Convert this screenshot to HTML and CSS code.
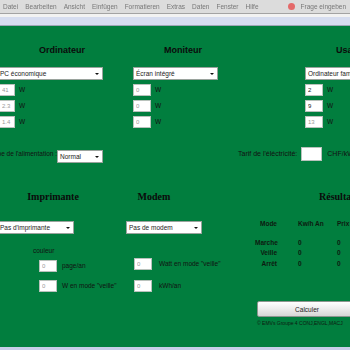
FILE: index.html
```html
<!DOCTYPE html>
<html lang="fr">

<head>
	<meta charset="UTF-8">
	<title>Consommation électrique</title>
	<link rel="stylesheet" href="styles.css">
</head>

<body>
	<div class="menubar">
		<span>Datei</span>
		<span>Bearbeiten</span>
		<span>Ansicht</span>
		<span>Einfügen</span>
		<span>Formatieren</span>
		<span>Extras</span>
		<span>Daten</span>
		<span>Fenster</span>
		<span>Hilfe</span>
		<span class="help"><i class="dot"></i>Frage eingeben</span>
	</div>
	<div class="menu-rule"></div>
	<div class="toolbar"></div>

	<div class="sheet">
		<!-- appareils -->
		<div class="devices">
			<div class="dev dev-pc">
				<h2>Ordinateur</h2>
				<div class="combo">PC économique</div>
				<div class="watt"><input value="41"> W</div>
				<div class="watt"><input value="2.3"> W</div>
				<div class="watt"><input value="1.4"> W</div>
			</div>
			<div class="dev dev-screen">
				<h2>Moniteur</h2>
				<div class="combo">Écran intégré</div>
				<div class="watt"><input value="0"> W</div>
				<div class="watt"><input value="0"> W</div>
				<div class="watt"><input value="0"> W</div>
			</div>
			<div class="dev dev-use">
				<h2>Usage</h2>
				<div class="combo">Ordinateur familial</div>
				<div class="watt"><input class="dark" value="2"> W</div>
				<div class="watt"><input class="dark" value="9"> W</div>
				<div class="watt"><input value="13"> W</div>
			</div>
		</div>

		<!-- réglages -->
		<div class="settings">
			<div class="supply">
				<div class="cut"><span>Type de l'alimentation :</span></div>
				<div class="combo">Normal</div>
			</div>
			<div class="tariff">
				<span>Tarif de l'éléctricité:</span>
				<input class="price" value="">
				<span>CHF/kWh</span>
			</div>
		</div>

		<div class="lower">
			<div class="printer">
				<h3>Imprimante</h3>
				<div class="combo">Pas d'imprimante</div>
				<div class="note">couleur</div>
				<div class="watt"><input value="0"> page/an</div>
				<div class="watt"><input value="0"> W en mode "veille"</div>
			</div>
			<div class="modem">
				<h3>Modem</h3>
				<div class="combo">Pas de modem</div>
				<div class="watt"><input value="0"> Watt en mode "veille"</div>
				<div class="watt"><input value="0"> kWh/an</div>
			</div>
			<div class="results">
				<h3>Résultats</h3>
				<div class="table">
					<b>Mode</b><b>Kw/h An</b><b>Prix</b>
					<b class="gap">Marche</b><b class="gap">0</b><b class="gap">0</b>
					<b>Veille</b><b>0</b><b>0</b>
					<b>Arrêt</b><b>0</b><b>0</b>
				</div>
			</div>
		</div>

		<div class="footer">
			<button class="calc">Calculer</button>
			<p>© EMVs Groupe 4 CONJ,ENGL,MACJ</p>
		</div>
	</div>
</body>

</html>
```

FILE: styles.css
```css
* {
	box-sizing: border-box;
}

body {
	margin: 0;
	width: 350px;
	height: 350px;
	overflow: hidden;
	background: #c6cfe9;
	font: 6.5px/10px "Liberation Sans", Arial, sans-serif;
	color: #111;
}

/* barre de menus (floue dans la capture) */
.menubar {
	height: 13px;
	display: flex;
	align-items: center;
	gap: 7px;
	padding-left: 3px;
	background: #dcdcdc;
	color: #777;
	font-size: 6.5px;
	white-space: nowrap;
	overflow: hidden;
	filter: blur(0.7px);
}

.menubar .help {
	margin-left: 22px;
	display: flex;
	align-items: center;
	gap: 6px;
}

.menubar .dot {
	width: 7px;
	height: 7px;
	border-radius: 50%;
	background: #e46a6a;
}

.menu-rule {
	height: 4px;
	border-top: 1px solid #a3a3a3;
	background: #f2f2f2;
}

.toolbar {
	height: 9px;
	background: #d6ddf0;
	border-bottom: 1px solid #9ea6b6;
}

.sheet {
	height: 321px;
	background: #017e3e;
	overflow: hidden;
}

h2,
h3 {
	margin: 0;
	height: 12px;
	line-height: 12px;
	white-space: nowrap;
	color: #0b0b0b;
}

h2 {
	font-size: 9px;
	font-weight: bold;
}

h3 {
	font: bold 10px/12px "Liberation Serif", "Times New Roman", serif;
}

.combo {
	position: relative;
	height: 13px;
	padding-left: 2px;
	background: #fff;
	border: 1px solid #9aa39d;
	line-height: 11px;
	white-space: nowrap;
	overflow: hidden;
	color: #222;
}

.combo::after {
	content: "";
	position: absolute;
	right: 3px;
	top: 5px;
	border: 2px solid transparent;
	border-top: 2px solid #111;
	border-bottom: 0;
}

.watt {
	display: flex;
	align-items: center;
	gap: 4px;
	height: 12px;
	margin-top: 4px;
	white-space: nowrap;
}

input {
	width: 18px;
	height: 12px;
	margin: 0;
	padding: 0 0 0 2px;
	border: 1px solid #b9c2bc;
	background: #fff;
	font: 6px "Liberation Sans", Arial, sans-serif;
	color: #9a9a9a;
}

input.dark {
	color: #222;
}

/* bloc du haut */
.devices {
	display: grid;
	grid-template-columns: 133px 172px 120px;
	padding-top: 18px;
}

.devices .combo {
	margin-top: 11px;
	margin-bottom: 3px;
}

.dev-pc {
	margin-left: -3px;
}

.dev-pc h2 {
	width: 130px;
	text-align: center;
}

.dev-pc .combo {
	width: 106px;
}

.dev-pc input {
	padding-left: 4px;
}

.dev-screen h2 {
	width: 100px;
	text-align: center;
}

.dev-screen .combo {
	width: 85px;
}

.dev-use h2 {
	padding-left: 31px;
}

.dev-use .combo {
	width: 110px;
}

/* alimentation et tarif */
.settings {
	display: flex;
	align-items: center;
	margin-top: 19px;
	height: 14px;
}

.supply {
	display: flex;
	align-items: center;
	width: 103px;
}

.cut {
	display: flex;
	justify-content: flex-end;
	width: 57px;
	overflow: hidden;
	white-space: nowrap;
}

.supply .combo {
	width: 46px;
	margin-top: 4px;
}

.tariff {
	display: flex;
	align-items: center;
	gap: 4px;
	margin-left: 135px;
	font-size: 7px;
	white-space: nowrap;
}

input.price {
	width: 21px;
	height: 14px;
	margin-right: 1px;
}

/* bloc du bas */
.lower {
	display: grid;
	grid-template-columns: 126px 129px 120px;
	margin-top: 30px;
}

.lower .combo {
	margin-top: 18px;
}

.printer {
	margin-left: -3px;
}

.printer h3 {
	width: 112px;
	text-align: center;
}

.printer .combo {
	width: 77px;
}

.printer .note {
	margin: 13px 0 0 36px;
	line-height: 8px;
}

.printer .watt {
	margin-left: 42px;
	gap: 5px;
}

.printer .watt:nth-child(4) {
	margin-top: 5px;
}

.printer .watt:nth-child(5) {
	margin-top: 8px;
}

.modem h3 {
	width: 56px;
	text-align: center;
}

.modem .combo {
	width: 76px;
}

.modem .watt {
	margin-left: 8px;
	gap: 7px;
}

.modem .watt:nth-child(3) {
	margin-top: 24px;
}

.modem .watt:nth-child(4) {
	margin-top: 10px;
}

.results h3 {
	padding-left: 64px;
}

.table {
	display: grid;
	grid-template-columns: 22px 18px auto;
	column-gap: 21px;
	margin-top: 16px;
	line-height: 10.5px;
	white-space: nowrap;
	font-size: 6.5px;
	color: #0d1a10;
}

.table b:nth-child(3n+1) {
	text-align: right;
}

.table .gap {
	margin-top: 8px;
}

/* bouton */
.footer {
	margin-top: 9px;
	padding-left: 257px;
}

.calc {
	display: block;
	width: 100px;
	height: 16px;
	padding: 0;
	border: 1px solid #8d958f;
	border-radius: 2px;
	background: linear-gradient(#ffffff, #ececec 50%, #d6d6d6);
	font: 6.5px "Liberation Sans", Arial, sans-serif;
	color: #222;
}

.footer p {
	margin: 3px 0 0;
	font-size: 5px;
	line-height: 6px;
	white-space: nowrap;
	color: #0d1a10;
}
```
